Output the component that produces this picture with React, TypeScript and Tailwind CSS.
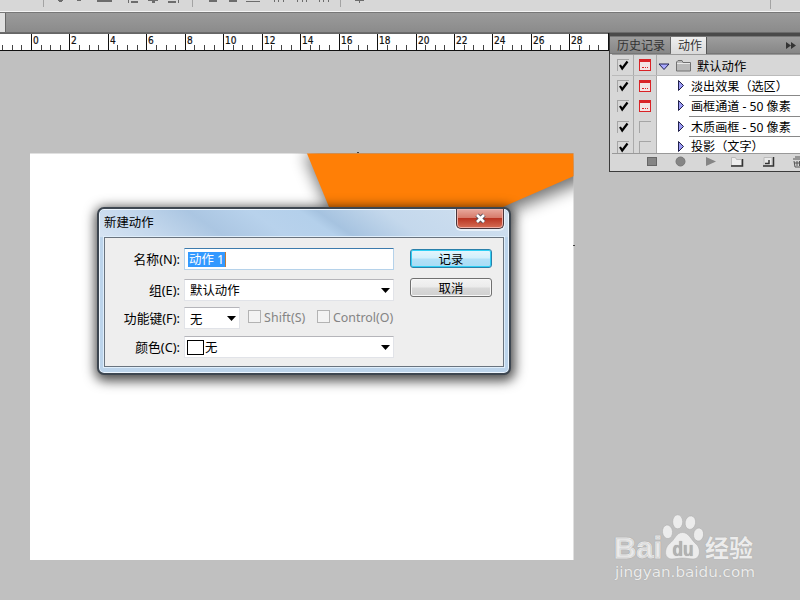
import { useState } from "react";
import clsx from "clsx";

interface Action {
  name: string;
  dialog: boolean;
}

const ACTIONS: Action[] = [
  { name: "淡出效果（选区）", dialog: true },
  { name: "画框通道 - 50 像素", dialog: true },
  { name: "木质画框 - 50 像素", dialog: false },
  { name: "投影（文字）", dialog: false },
];

const RULER_START = 31.4;
const RULER_STEP = 38.46;

function OptionsBar() {
  return (
    <div className="h-[13px] shrink-0 bg-[#d7d7d7] border-b border-[#777] shadow-[inset_0_-1px_0_#f4f4f4]">
      <svg width="800" height="11" shapeRendering="crispEdges">
        <g stroke="#a3a3a3">
          <path d="M43.5 0v7M192.5 0v7M340.5 0v7M770.5 0v9" />
        </g>
        <g fill="#6c6c6c">
          <path d="M58 0h5v1h-5zM59 1h3v1h-3zM77 0h4v1h-4zM97 0h15v2H97zM128 0h1v3h-1zM131 1h7v2h-7zM148 0h10v1h-10zM152 1h3v2h-3zM168 1h8v2h-8zM178 0h1v3h-1z" />
          <path d="M209 0h8v2h-8zM229 0h8v2h-8zM246 1h14v1h-14zM274 0h1v2h-1zM278 0h1v2h-1zM283 0h1v2h-1zM297 0h1v2h-1zM302 0h1v2h-1zM306 0h1v2h-1zM319 0h1v2h-1zM323 0h1v2h-1zM328 0h1v2h-1zM355 0h9v1h-9zM359 1h1v2h-1z" />
        </g>
      </svg>
    </div>
  );
}

function Ruler() {
  const ticks = Array.from({ length: 64 }, (_, i) => i - 3);
  return (
    <svg width="609" height="18" className="block shrink-0 bg-white">
      {ticks.map((i) => {
        const x = Math.floor(RULER_START + (i * RULER_STEP) / 4);
        const major = i >= 0 && i % 4 === 0;
        return (
          <rect key={i} x={x} y={major ? 0 : 12} width="1" height={major ? 18 : 5} fill={major ? "#111" : "#444"} />
        );
      })}
      {Array.from({ length: 15 }, (_, i) => (
        <text
          key={i}
          x={Math.floor(RULER_START + i * RULER_STEP) + 2}
          y="11"
          fill="#111"
          stroke="#111"
          strokeWidth="0.2"
          className="text-[10px] font-['DejaVu_Sans_Condensed','Noto_Sans',sans-serif]"
        >
          {i * 2}
        </text>
      ))}
      <rect y="17" width="609" height="1" fill="#111" />
      <rect width="609" height="1" fill="#666" />
      <rect x="608" width="1" height="18" fill="#111" />
    </svg>
  );
}

function Check() {
  return (
    <div className="w-[12px] h-[12px] border-l border-t border-[#a5a5a5]">
      <svg width="11" height="11" viewBox="0 0 11 11" fill="none" stroke="#000" strokeWidth="2.2">
        <path d="M2 5l2.200 3.500L9.500 1.500" />
      </svg>
    </div>
  );
}

function DialogMark({ on }: { on: boolean }) {
  if (!on) return <div className="w-[12px] h-[12px] border-l border-t border-[#a5a5a5]" />;
  return (
    <svg width="12" height="12" shapeRendering="crispEdges">
      <rect x="0.5" y="0.5" width="11" height="11" fill="#f3e3e3" stroke="#d92226" />
      <path d="M1 2h10" stroke="#d92226" strokeWidth="2" />
      <path d="M3 8.5h2M6 8.5h1M8 8.5h1" stroke="#d92226" />
    </svg>
  );
}

function RowToggles({ dialog }: { dialog: boolean }) {
  return (
    <>
      <div className="w-[22px] shrink-0 flex pl-[5px] pt-[4px] bg-[#d7d7d7] border-r border-[#aaa]">
        <Check />
      </div>
      <div className="w-[23px] shrink-0 flex pl-[5px] pt-[4px] bg-[#d7d7d7] border-r border-[#aaa]">
        <DialogMark on={dialog} />
      </div>
    </>
  );
}

function ActionsPanel() {
  return (
    <div className="absolute left-[609px] top-[33px] w-[191px] h-[139px] flex flex-col overflow-hidden bg-[#d7d7d7] border-l border-b border-[#3b3b3b] text-[12px] text-black">
      <div className="h-[4px] shrink-0 bg-[#4a4a4a] border-b border-[#777]" />
      <div className="h-[17px] shrink-0 flex items-stretch bg-linear-to-b from-[#9d9d9d] to-[#878787] border-b border-[#777] leading-[17px]">
        <div className="w-[61px] pl-[7px] text-[#333] border-r border-[#666]">历史记录</div>
        <div className="w-[36px] -mb-px pl-[7px] bg-linear-to-b from-[#efefef] to-[#dadada] text-[#333] border-r border-[#555]">动作</div>
        <svg width="10" height="7" className="ml-auto mr-[4px] mt-[5px]" fill="#333">
          <path d="M0 0l5 3.5L0 7zM5 0l5 3.5L5 7z" />
        </svg>
      </div>
      <div className="ml-[2px] h-[99px] shrink-0 border-t border-[#999]">
        <div className="h-[21px] flex bg-[#d7d7d7] border-b border-[#bbb]">
          <RowToggles dialog />
          <svg width="12" height="9" className="ml-[1px] mt-[8px] shrink-0">
            <path d="M1 1h10L6 6.5z" fill="#a9a9ff" stroke="#222252" />
          </svg>
          <svg width="16" height="13" className="ml-[6px] mt-[5px] shrink-0">
            <path d="M0.500 11V2l1.500-1.500h4l1 2h7.500V11z" fill="#b9b9b9" stroke="#707070" />
            <path d="M1 3.500h13" stroke="#e8e8e8" />
          </svg>
          <span className="ml-[5px] leading-[23px] text-[12.300px]">默认动作</span>
        </div>
        {ACTIONS.map((a) => (
          <div key={a.name} className="h-[20.400px] last:h-[16px] flex bg-white group">
            <RowToggles dialog={a.dialog} />
            <svg width="9" height="13" className="ml-[20px] mt-[3px] shrink-0">
              <path d="M1.500 1.500l5 5-5 5z" fill="#9c9cf5" stroke="#20204a" />
            </svg>
            <div className="ml-[3px] pl-[2px] flex-1 whitespace-nowrap leading-[22px] group-last:leading-[20px] border-b border-[#888] group-last:border-0 text-[12.100px]">
              {a.name}
            </div>
          </div>
        ))}
      </div>
      <div className="h-[17px] shrink-0 ml-[2px] bg-[#d7d7d7] border-t border-[#999]">
        <svg width="188" height="16">
          <rect x="35.500" y="3.500" width="9" height="8" fill="#858585" stroke="#666" />
          <circle cx="68.500" cy="7.500" r="4.500" fill="#858585" stroke="#777" />
          <path d="M94 3l10 4.500L94 12z" fill="#858585" />
          <path d="M119.500 11.500v-8h4l1 2h5v6z" fill="#eee" stroke="#bbb" />
          <path d="M119 12h11.500V5" fill="none" stroke="#333" strokeWidth="1.500" />
          <path d="M152 3.500h8v8h-8z" fill="#e9e9e9" stroke="#bbb" />
          <path d="M151 12h10.500V3M153 9.500h4V6" fill="none" stroke="#333" strokeWidth="1.500" />
          <path d="M181 5h9M183 3h5M182 7l1 6h6M185 7v5M187.500 7v5M182 9h6" fill="none" stroke="#555" />
        </svg>
      </div>
    </div>
  );
}

function Artwork() {
  return (
    <svg width="544" height="408" className="block mt-[102px] ml-[30px] overflow-visible">
      <defs>
        <filter id="soft" x="-20%" y="-20%" width="140%" height="140%">
          <feGaussianBlur stdDeviation="8" />
        </filter>
        <clipPath id="sheet">
          <rect width="543.500" height="407" />
        </clipPath>
      </defs>
      <rect y="0.500" width="543.500" height="406.500" fill="#fff" />
      <g clipPath="url(#sheet)">
        <path d="M274 0H560V26L470 62L300 60z" fill="#000" opacity="0.550" filter="url(#soft)" />
        <path d="M277 0.500H544V23L473 54L330 110L299 54z" fill="#ff7f06" />
      </g>
      <path d="M327 -1h2v1h-2zM543 92h2v1h-2z" fill="#444" />
    </svg>
  );
}

function SelectArrow() {
  return (
    <svg width="9" height="5" className="ml-auto mt-px shrink-0">
      <path d="M0 0h9L4.500 5z" fill="#000" />
    </svg>
  );
}

function FieldLabel({ children }: { children: string }) {
  return <label className="w-[75px] mr-[4px] pt-[2px] shrink-0 text-right whitespace-nowrap text-[12.800px]">{children}</label>;
}

function NewActionDialog() {
  const [name] = useState("动作 1");
  const select = "h-[22px] flex items-center bg-white border border-[#e1e3e8] border-t-[#b5b5ba]";
  return (
    <div className="absolute left-[97px] top-[207px] w-[414px] h-[168px] flex flex-col rounded-[7px] border-2 border-[#3d4650] bg-[#bcd4eb] shadow-[inset_0_0_0_1px_#edf6ff,1px_3px_12px_3px_rgba(0,0,0,0.7)] text-[12.400px] text-black font-['Noto_Sans','Noto_Sans_CJK_SC',sans-serif]">
      <div className="m-px mb-0 h-[27px] shrink-0 rounded-t-[5px] flex items-start bg-[linear-gradient(35deg,#d6e4f3_0%,#c3d7ec_14%,#abc6e2_28%,#b8d2ec_42%,#b4d0eb_53%,#a6c3e0_57%,#c4d8ec_72%,#d0e0f0_100%)]">
        <span className="ml-[4px] mt-[4px] leading-[18px]">新建动作</span>
        <button className="ml-auto mr-[4px] -mt-[1px] w-[48px] h-[20px] rounded-b-[5px] border border-t-0 border-[#47353b] flex items-center justify-center bg-[linear-gradient(#e8a99d_0%,#d77c6c_45%,#b93422_50%,#d66e55_100%)] shadow-[inset_0_0_0_1px_#edafa6,0_1px_0_1px_#e9f1f9]">
          <svg width="13" height="11" viewBox="0 0 13 11" fill="none">
            <path d="M3 2l7 7M10 2L3 9" stroke="#564d58" strokeWidth="4.500" />
            <path d="M3 2l7 7M10 2L3 9" stroke="#fff" strokeWidth="2.600" />
          </svg>
        </button>
      </div>
      <div className="mx-[5px] mt-0 h-[130px] shrink-0 flex bg-[#eee] border border-[#69737e] shadow-[0_0_0_1px_#dfeefb]">
        <div className="w-[290px] shrink-0 pt-[10px] flex flex-col">
          <div className="h-[22px] flex items-center">
            <FieldLabel>名称(N):</FieldLabel>
            <div className="w-[210px] h-[22px] pl-[3px] flex items-center bg-white rounded-[1px] border border-[#b5d2ea] border-t-[#3d7bad]">
              <span className="h-[15px] leading-[15px] px-px bg-[#3399ff] text-white border-r border-[#c47a33] whitespace-nowrap">{name}</span>
            </div>
          </div>
          <div className="h-[22px] mt-[9px] flex items-center">
            <FieldLabel>组(E):</FieldLabel>
            <div className={clsx(select, "w-[210px] pl-[5px] pr-[3px]")}>
              <span className="pt-[3px]">默认动作</span>
              <SelectArrow />
            </div>
          </div>
          <div className="h-[22px] mt-[6px] flex items-center">
            <FieldLabel>功能键(F):</FieldLabel>
            <div className={clsx(select, "w-[56px] shrink-0 pl-[5px] pr-[3px]")}>
              <span className="pt-[4px]">无</span>
              <SelectArrow />
            </div>
            <div className="-mt-[3px] ml-[8px] flex items-center text-[#848484] whitespace-nowrap">
              <span className="w-[13px] h-[13px] mr-[3px] border border-[#b3b3b3] bg-[#f3f3f3]" />
              <span className="w-[53px] pt-[3px] tracking-[0.1px]">Shift(S)</span>
              <span className="w-[13px] h-[13px] mr-[3px] border border-[#b3b3b3] bg-[#f3f3f3]" />
              <span className="pt-[3px]">Control(O)</span>
            </div>
          </div>
          <div className="h-[22px] mt-[7px] flex items-center">
            <FieldLabel>颜色(C):</FieldLabel>
            <div className={clsx(select, "w-[210px] pl-[2px] pr-[3px]")}>
              <span className="w-[17px] h-[15px] mr-px border border-black bg-white" />
              <span className="pt-[3px]">无</span>
              <SelectArrow />
            </div>
          </div>
        </div>
        <div className="ml-[15px] pt-[11px] flex flex-col gap-[10px]">
          <button className="w-[82px] h-[19px] rounded-[3px] border border-[#2b80aa] bg-[linear-gradient(#e6f6fd_0%,#d2effb_48%,#b2e1f8_52%,#a9dcf5_100%)] shadow-[inset_0_0_0_1px_#30cff4] leading-[19px]">
            记录
          </button>
          <button className="w-[82px] h-[19px] rounded-[3px] border border-[#707070] bg-[linear-gradient(#f3f3f3_0%,#ebebeb_48%,#d9d9d9_52%,#d0d0d0_100%)] shadow-[inset_0_0_0_1px_#f7f7f7] leading-[19px]">
            取消
          </button>
        </div>
      </div>
    </div>
  );
}

function Watermark() {
  return (
    <div className="absolute left-[613px] top-[513px] w-[150px] text-[#ececec] [text-shadow:0_0_1px_#999]">
      <svg width="145" height="49" className="block overflow-visible">
        <g fill="#ececec" stroke="#aaa" strokeWidth="0.500">
          <ellipse cx="54.500" cy="18.800" rx="5" ry="6.800" transform="rotate(-6 54.5 18.8)" />
          <ellipse cx="64.700" cy="8.800" rx="5" ry="7" />
          <ellipse cx="77.300" cy="9.600" rx="5.200" ry="6.800" transform="rotate(10 77 10)" />
          <ellipse cx="85.500" cy="21.500" rx="5" ry="6.500" transform="rotate(6 85 22)" />
          <path d="M69.500 19.500C76 19.500 78 27 83 31C88 35 88 46 80 46C76 46 74 45 69.500 45C65 45 63 46 59 46C51 46 51 36 56 31C62 27 63 19.500 69.500 19.500z" />
        </g>
        <text x="1" y="45" textLength="48" lengthAdjust="spacingAndGlyphs" fill="currentColor" stroke="currentColor" strokeWidth="0.800" className="text-[30px] font-bold font-['Liberation_Sans',sans-serif]">Bai</text>
        <text x="59.500" y="43" textLength="21" lengthAdjust="spacingAndGlyphs" fill="#b2b2b2" className="text-[20px] font-bold font-['Liberation_Sans',sans-serif]">du</text>
        <text x="92" y="44" textLength="48" lengthAdjust="spacingAndGlyphs" fill="currentColor" className="text-[24px] font-bold font-['Noto_Sans_CJK_SC',sans-serif]">经验</text>
      </svg>
      <svg width="145" height="20" className="block overflow-visible">
        <text x="2" y="15" textLength="140" lengthAdjust="spacingAndGlyphs" fill="currentColor" className="text-[14px] font-['DejaVu_Sans',sans-serif]">jingyan.baidu.com</text>
      </svg>
    </div>
  );
}

export default function App() {
  return (
    <div className="relative w-[800px] h-[600px] overflow-hidden flex flex-col bg-[#c0c0c0] font-['Noto_Sans','Noto_Sans_CJK_SC',sans-serif]">
      <OptionsBar />
      <div className="h-[20px] shrink-0 flex bg-linear-to-b from-[#9b9b9b] to-[#8b8b8b] border-b border-[#6b6b6b]">
        <div className="w-[6px] bg-[#e0e0e0] border-r border-[#666]" />
      </div>
      <Ruler />
      <Artwork />
      <ActionsPanel />
      <NewActionDialog />
      <Watermark />
    </div>
  );
}
